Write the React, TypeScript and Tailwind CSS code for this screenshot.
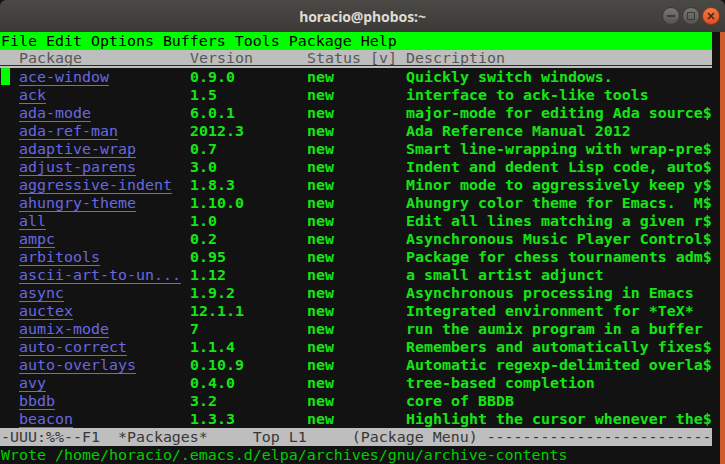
import React from "react";

const rows: [string, string, string, string][] = [
  ["ace-window", "0.9.0", "new", "Quickly switch windows."],
  ["ack", "1.5", "new", "interface to ack-like tools"],
  ["ada-mode", "6.0.1", "new", "major-mode for editing Ada source$"],
  ["ada-ref-man", "2012.3", "new", "Ada Reference Manual 2012"],
  ["adaptive-wrap", "0.7", "new", "Smart line-wrapping with wrap-pre$"],
  ["adjust-parens", "3.0", "new", "Indent and dedent Lisp code, auto$"],
  ["aggressive-indent", "1.8.3", "new", "Minor mode to aggressively keep y$"],
  ["ahungry-theme", "1.10.0", "new", "Ahungry color theme for Emacs.  M$"],
  ["all", "1.0", "new", "Edit all lines matching a given r$"],
  ["ampc", "0.2", "new", "Asynchronous Music Player Control$"],
  ["arbitools", "0.95", "new", "Package for chess tournaments adm$"],
  ["ascii-art-to-un...", "1.12", "new", "a small artist adjunct"],
  ["async", "1.9.2", "new", "Asynchronous processing in Emacs"],
  ["auctex", "12.1.1", "new", "Integrated environment for *TeX*"],
  ["aumix-mode", "7", "new", "run the aumix program in a buffer"],
  ["auto-correct", "1.1.4", "new", "Remembers and automatically fixes$"],
  ["auto-overlays", "0.10.9", "new", "Automatic regexp-delimited overla$"],
  ["avy", "0.4.0", "new", "tree-based completion"],
  ["bbdb", "3.2", "new", "core of BBDB"],
  ["beacon", "1.3.3", "new", "Highlight the cursor whenever the$"],
];

const mono = "font-['DejaVu_Sans_Mono',monospace] text-[14.95px] leading-[18px] whitespace-pre";
const monoNoLead = "font-['DejaVu_Sans_Mono',monospace] text-[14.95px] whitespace-pre";

export default function App() {
  return (
    <div className="w-[725px] h-[464px] overflow-hidden flex flex-col bg-[#121212]">
      {/* title bar */}
      <div className="h-[32px] shrink-0 grid grid-cols-[1fr_auto_1fr] items-center bg-gradient-to-b from-[#4a4945] to-[#3b3a36] rounded-t-[6px]">
        <div />
        <div className="font-['Noto_Sans',sans-serif] font-bold text-[14px] text-[#dfdbd2] tracking-[-0.1px]">
          horacio@phobos:~
        </div>
        <div className="flex justify-end items-center gap-[2px] pr-[5px]">
          <div className="w-[18px] h-[18px] rounded-full bg-gradient-to-b from-[#7a7873] to-[#55534f] border border-[#3a3935] flex items-center justify-center">
            <div className="w-[8px] h-[2px] bg-[#3c3b37]" />
          </div>
          <div className="w-[18px] h-[18px] rounded-full bg-gradient-to-b from-[#7a7873] to-[#55534f] border border-[#3a3935] flex items-center justify-center">
            <div className="w-[8px] h-[8px] border-[1.5px] border-[#3c3b37]" />
          </div>
          <div className="w-[18px] h-[18px] rounded-full bg-gradient-to-b from-[#f47b46] to-[#df4f1c] border border-[#8e3a17] flex items-center justify-center">
            <svg width="8" height="8" viewBox="0 0 8 8">
              <path d="M1 1 L7 7 M7 1 L1 7" stroke="#3c2a20" strokeWidth="1.6" />
            </svg>
          </div>
        </div>
      </div>
      <div className="flex flex-1 min-h-0">
        <div className="w-[720px] flex flex-col bg-[#121212]">
          {/* menu bar */}
          <div className={`w-[712px] h-[18px] bg-[#00ff00] text-black pl-[1px] ${mono}`}>
            File Edit Options Buffers Tools Package Help
          </div>
          {/* header line */}
          <div
            className={`w-[712px] h-[18px] text-[#575757] pl-[1px] leading-[17px] flex bg-[linear-gradient(to_bottom,#bebebe_15px,#2e2e2e_15px,#2e2e2e_16px,#bebebe_16px)] ${monoNoLead}`}
          >
            <span className="w-[18px]" />
            <span className="w-[171px]">Package</span>
            <span className="w-[117px]">Version</span>
            <span className="w-[99px]">Status [v]</span>
            <span>Description</span>
          </div>
          {rows.map(([name, ver, status, desc], i) => (
            <div key={name} className={`w-[712px] h-[18px] pl-[1px] flex ${mono}`}>
              <span className="w-[18px] flex">
                {i === 0 && <span className="w-[9px] h-[17px] bg-[#00ff00]" />}
              </span>
              <span className="w-[171px]">
                <span className="text-[#6868e0] underline decoration-1 underline-offset-[3px]">{name}</span>
              </span>
              <span className="w-[117px] text-[#14e614] font-bold">{ver}</span>
              <span className="w-[99px] text-[#14e614] font-bold">{status}</span>
              <span className="text-[#14e614] font-bold">{desc}</span>
            </div>
          ))}
          {/* mode line */}
          <div className={`w-[712px] h-[18px] bg-[#bebebe] text-[#383838] pl-[1px] ${mono}`}>
            {"-UUU:%%--F1  *Packages*     Top L1     (Package Menu) -------------------------"}
          </div>
          {/* echo area */}
          <div className={`w-[712px] h-[18px] text-[#00cd00] pl-[1px] ${mono}`}>
            Wrote /home/horacio/.emacs.d/elpa/archives/gnu/archive-contents
          </div>
        </div>
        <div className="w-[5px] bg-[#cf5a2c]" />
      </div>
    </div>
  );
}
